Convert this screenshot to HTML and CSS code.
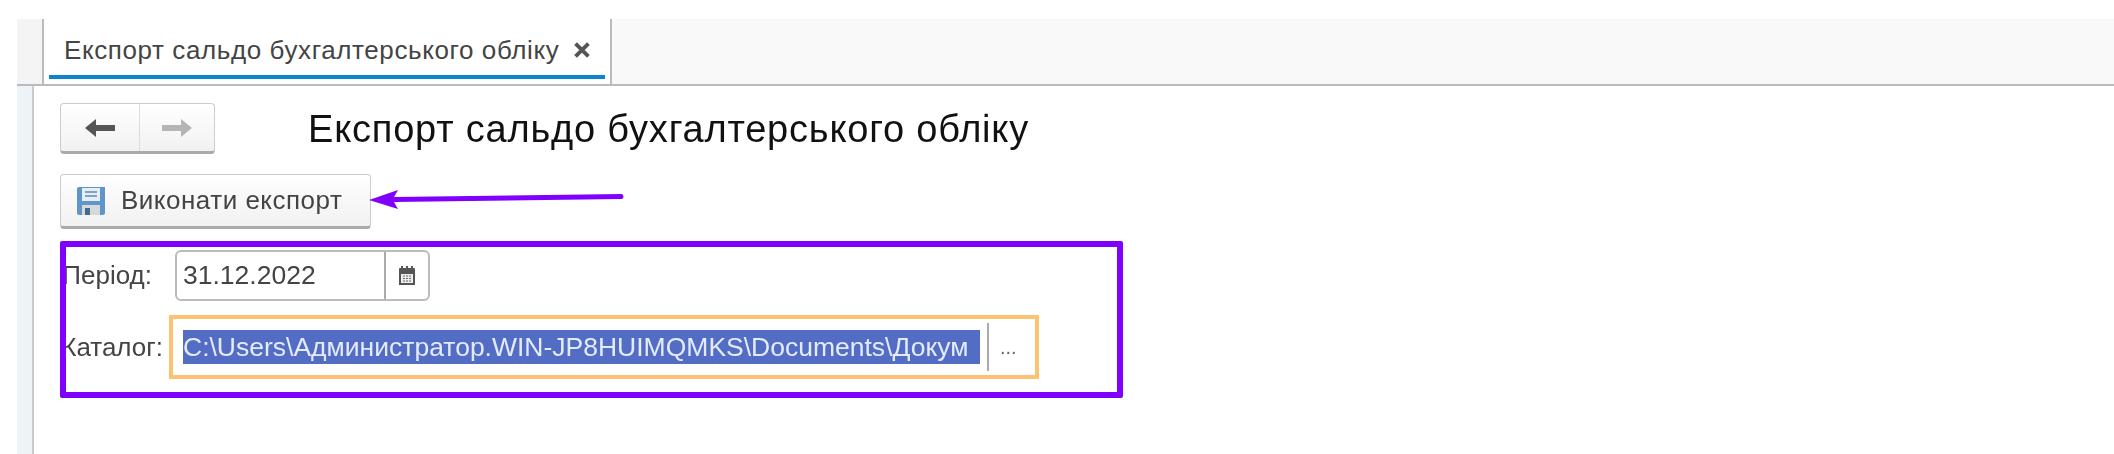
FILE: index.html
```html
<!DOCTYPE html>
<html lang="uk">
<head>
<meta charset="utf-8">
<title>Експорт сальдо бухгалтерського обліку</title>
<link rel="stylesheet" href="styles.css">
</head>
<body>
<div class="tabbar">
  <div class="tab-gap"></div>
  <div class="tab">
    <span class="tab-title">Експорт сальдо бухгалтерського обліку</span>
    <svg class="tab-close" viewBox="0 0 14 14"><path d="M2 2 12 12M12 2 2 12" fill="none" stroke="#555" stroke-width="3"/></svg>
  </div>
</div>
<div class="page">
  <div class="side"></div>
  <div class="content">
    <div class="head">
      <div class="nav">
        <span class="nav-btn nav-back">
          <svg class="arrow-icon" viewBox="0 0 30 20"><path d="M0 10 11 1V7H30V13H11V19Z" fill="#555"/></svg>
        </span>
        <span class="nav-btn">
          <svg class="arrow-icon" viewBox="0 0 30 20"><path d="M30 10 19 1V7H0V13H19V19Z" fill="#b5b5b5"/></svg>
        </span>
      </div>
      <h1 class="title">Експорт сальдо бухгалтерського обліку</h1>
    </div>
    <div class="action-row">
      <button class="run-btn">
        <svg class="save-icon" viewBox="0 0 30 30">
          <path d="M1 3Q1 1 3 1H29V27Q29 29 27 29H3Q1 29 1 27Z" fill="#5f95c9"/>
          <rect x="6" y="2" width="18" height="13" fill="#e6eef5"/>
          <path d="M9 6H21M9 10H21" stroke="#7fa3c6" stroke-width="2"/>
          <rect x="6" y="19" width="18" height="10" fill="#d5d9dc"/>
          <rect x="9" y="22" width="5" height="7" fill="#44698c"/>
        </svg>
        <span>Виконати експорт</span>
      </button>
      <svg class="pointer" viewBox="0 0 256 20"><path d="M1 11 30 1 26 8 254 5Q257 8 254 10L26 13 30 20Z" fill="#8000ff"/></svg>
    </div>
    <div class="frame">
      <div class="row row-period">
        <label class="label label-period">Період:</label>
        <div class="date-field">
          <span class="date-value">31.12.2022</span>
          <span class="date-btn">
            <svg class="cal-icon" viewBox="0 0 18 21">
              <path d="M1 4Q1 3 2 3H16Q17 3 17 4V20H1Z" fill="#555"/>
              <path d="M4 1V4M9 1V4M14 1V4" stroke="#555" stroke-width="2"/>
              <rect x="3" y="9" width="12" height="9" fill="#eee"/>
              <path d="M5 11H13M5 13.500H13M5 16H13" stroke="#666" stroke-width="1.200" stroke-dasharray="2 1"/>
            </svg>
          </span>
        </div>
      </div>
      <div class="row row-path">
        <label class="label label-path">Каталог:</label>
        <div class="path-field">
          <div class="path-clip"><span class="path-value">C:\Users\Администратор.WIN-JP8HUIMQMKS\Documents\Докум</span></div>
          <span class="path-sep"></span>
          <span class="path-dots">...</span>
        </div>
      </div>
    </div>
  </div>
</div>
</body>
</html>
```
FILE: styles.css
```css
html, body { margin: 0; height: 100%; overflow: hidden; }
body { background: #fff; font-family: "Liberation Sans", Arial, sans-serif; color: #333; padding-top: 19px; box-sizing: border-box; filter: blur(.5px); }

.tabbar { display: flex; height: 67px; margin-left: 17px; background: #f9f9f9; border-bottom: 2px solid #bbb; box-sizing: border-box; }
.tab-gap { width: 25px; background: #f4f4f4; }
.tab { display: flex; align-items: center; width: 570px; padding: 0 0 3px 20px; box-sizing: border-box; background: #fff; border-left: 2px solid #bbb; border-right: 2px solid #bbb; position: relative; }
.tab::after { content: ""; position: absolute; left: 5px; right: 5px; bottom: 5px; height: 4px; background: #0a84cc; }
.tab-title { font-size: 26px; letter-spacing: .6px; white-space: nowrap; color: #444; }
.tab-close { width: 18px; height: 18px; margin-left: 14px; }

.page { display: flex; height: 368px; margin-left: 17px; }
.side { width: 15px; background: #eef3f7; border-right: 2px solid #ccc; }
.content { padding: 17px 0 0 26px; flex: 1; }

.head { display: flex; align-items: center; }
.nav { display: flex; width: 155px; height: 51px; box-sizing: border-box; border: 1px solid #ccc; border-bottom: 3px solid #aaa; border-radius: 4px; background: linear-gradient(#fff, #f1f1f1); }
.nav-btn { flex: 1; display: flex; align-items: center; justify-content: center; }
.nav-back { flex: none; width: 78px; }
.nav-btn + .nav-btn { border-left: 1px solid #ddd; }
.arrow-icon { width: 30px; height: 20px; }
.title { margin: 2px 0 0 93px; font-size: 38px; letter-spacing: .8px; font-weight: normal; color: #111; white-space: nowrap; }

.action-row { display: flex; align-items: center; margin-top: 20px; }
.run-btn { display: flex; align-items: center; width: 311px; height: 55px; padding: 0 0 0 15px; box-sizing: border-box; border: 1px solid #ccc; border-bottom: 3px solid #aaa; border-radius: 4px; background: linear-gradient(#fff, #f1f1f1); font: 26px "Liberation Sans", Arial, sans-serif; letter-spacing: .5px; color: #444; }
.save-icon { width: 30px; height: 30px; margin-right: 15px; }
.pointer { width: 256px; height: 20px; margin-left: -3px; margin-top: -6px; }

.frame { width: 1063px; height: 157px; margin-top: 12px; box-sizing: border-box; border: 6px solid #8000ff; border-radius: 2px; padding: 3px 0 0 0; }
.row { display: flex; align-items: center; }
.label { display: flex; justify-content: flex-end; box-sizing: border-box; font-size: 26px; color: #444; white-space: nowrap; overflow: hidden; }
.label-period { width: 109px; padding-right: 23px; }
.label-path { width: 103px; padding-right: 6px; }

.date-field { display: flex; width: 255px; height: 51px; box-sizing: border-box; border: 2px solid #bbb; border-radius: 6px; }
.date-value { width: 209px; padding-left: 6px; box-sizing: border-box; border-right: 2px solid #aaa; font-size: 26.500px; line-height: 47px; color: #444; }
.date-btn { flex: 1; display: flex; align-items: center; justify-content: center; }
.cal-icon { width: 18px; height: 21px; }

.row-path { margin-top: 14px; }
.path-field { display: flex; align-items: center; width: 870px; height: 64px; box-sizing: border-box; border: 4px solid #fbc272; padding-left: 10px; }
.path-clip { width: 797px; height: 34px; overflow: hidden; white-space: nowrap; background: #536dc4; }
.path-value { display: inline-block; color: #e4ebff; font-size: 26.500px; line-height: 34px; }
.path-sep { width: 2px; height: 48px; margin-left: 7px; background: #aaa; }
.path-dots { margin-left: 11px; font-size: 20px; color: #666; }
```
